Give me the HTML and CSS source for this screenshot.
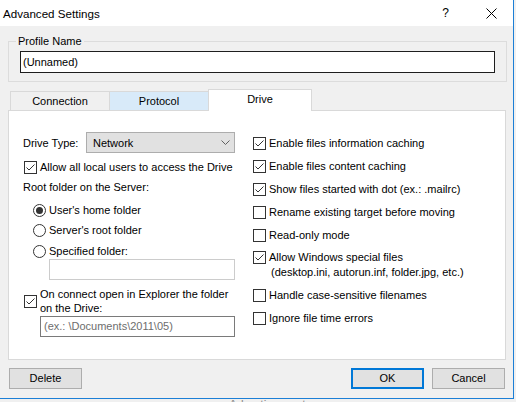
FILE: index.html
```html
<!DOCTYPE html>
<html>
<head>
<meta charset="utf-8">
<link rel="stylesheet" href="styles.css">
</head>
<body>
<div class="screen">
  <div class="window">
    <div class="titlebar">
      <span class="title">Advanced Settings</span>
      <span class="help">?</span>
      <svg class="close" width="11" height="11" viewBox="0 0 11 11"><path d="M0.5 0.5 L10.5 10.5 M10.5 0.5 L0.5 10.5" stroke="#000" stroke-width="1" fill="none"/></svg>
    </div>
    <div class="body">
      <fieldset class="profile">
        <legend>Profile Name</legend>
        <div class="edit name">(Unnamed)</div>
      </fieldset>

      <div class="tabs">
        <div class="tab">Connection</div>
        <div class="tab hover">Protocol</div>
        <div class="tab active">Drive</div>
      </div>

      <div class="panel">
        <div class="col left">
          <div class="row-select">
            <span>Drive Type:</span>
            <div class="select">
              <span>Network</span>
              <svg class="chev" width="9" height="5" viewBox="0 0 9 5"><path d="M0.5 0.5 L4.5 4.5 L8.5 0.5" stroke="#606060" stroke-width="1" fill="none"/></svg>
            </div>
          </div>
          <div class="cb cb-l r-allow">
            <span class="box on"><svg width="11" height="11" viewBox="0 0 11 11"><path d="M1.5 5.5 L4 8 L9.5 2.5" stroke="#333" stroke-width="1" fill="none"/></svg></span>
            <span class="lbl">Allow all local users to access the Drive</span>
          </div>
          <div class="text r-root">Root folder on the Server:</div>
          <div class="radio r-home"><span class="dot on"></span><span class="lbl">User's home folder</span></div>
          <div class="radio r-srv"><span class="dot"></span><span class="lbl">Server's root folder</span></div>
          <div class="radio r-spec"><span class="dot"></span><span class="lbl">Specified folder:</span></div>
          <div class="edit disabled spec"></div>
          <div class="cb cb-l multi r-explorer">
            <span class="box on"><svg width="11" height="11" viewBox="0 0 11 11"><path d="M1.5 5.5 L4 8 L9.5 2.5" stroke="#333" stroke-width="1" fill="none"/></svg></span>
            <span class="lbl">On connect open in Explorer the folder<br>on the Drive:</span>
          </div>
          <div class="edit path"><span class="ph">(ex.: \Documents\2011\05)</span></div>
        </div>

        <div class="col right">
          <div class="cb"><span class="box on"><svg width="11" height="11" viewBox="0 0 11 11"><path d="M1.5 5.5 L4 8 L9.5 2.5" stroke="#333" stroke-width="1" fill="none"/></svg></span><span class="lbl">Enable files information caching</span></div>
          <div class="cb"><span class="box on"><svg width="11" height="11" viewBox="0 0 11 11"><path d="M1.5 5.5 L4 8 L9.5 2.5" stroke="#333" stroke-width="1" fill="none"/></svg></span><span class="lbl">Enable files content caching</span></div>
          <div class="cb"><span class="box on"><svg width="11" height="11" viewBox="0 0 11 11"><path d="M1.5 5.5 L4 8 L9.5 2.5" stroke="#333" stroke-width="1" fill="none"/></svg></span><span class="lbl">Show files started with dot (ex.: .mailrc)</span></div>
          <div class="cb"><span class="box"></span><span class="lbl">Rename existing target before moving</span></div>
          <div class="cb"><span class="box"></span><span class="lbl">Read-only mode</span></div>
          <div class="cb two"><span class="box on"><svg width="11" height="11" viewBox="0 0 11 11"><path d="M1.5 5.5 L4 8 L9.5 2.5" stroke="#333" stroke-width="1" fill="none"/></svg></span><span class="lbl">Allow Windows special files<span class="sub">(desktop.ini, autorun.inf, folder.jpg, etc.)</span></span></div>
          <div class="cb"><span class="box"></span><span class="lbl">Handle case-sensitive filenames</span></div>
          <div class="cb"><span class="box"></span><span class="lbl">Ignore file time errors</span></div>
        </div>
      </div>

      <div class="buttons">
        <div class="btn">Delete</div>
        <div class="btn default">OK</div>
        <div class="btn">Cancel</div>
      </div>
    </div>
  </div>
  <div class="ad"><span>Advertisement</span></div>
</div>
</body>
</html>
```

FILE: styles.css
```css
* { box-sizing: border-box; }
html, body { margin: 0; padding: 0; }
body {
  font-family: "Liberation Sans", Arial, sans-serif;
  font-size: 11px;
  color: #000;
  background: #f0f0f0;
}
.screen {
  width: 516px;
  height: 402px;
  overflow: hidden;
  background: #f0f0f0;
  display: flex;
  flex-direction: column;
}
.window {
  flex: none;
  width: 514px;
  height: 399px;
  border-right: 1px solid #1c7fd6;
  border-bottom: 1px solid #1c7fd6;
  background: #f0f0f0;
  display: flex;
  flex-direction: column;
}
.titlebar {
  flex: none;
  height: 26px;
  background: #fff;
  display: flex;
  align-items: center;
}
.title { margin-left: 3px; font-size: 11.6px; }
.help { margin-left: auto; font-size: 12px; }
.close { margin-left: 37px; margin-right: 16px; }

.body { flex: 1; padding-top: 7px; }

.profile {
  margin: 0 0 0 8px;
  width: 499px;
  padding: 2px 11px 8px 11px;
  border: 1px solid #dcdcdc;
}
.profile legend {
  padding: 0 2px;
  margin-left: -4px;
  line-height: 16px;
  height: 16px;
}
.edit {
  background: #fff;
  border: 1px solid #7a7a7a;
}
.edit.name {
  height: 22px;
  border-color: #1e1e1e;
  padding-left: 2px;
  line-height: 20px;
}

.tabs {
  margin-top: 7px;
  margin-left: 10px;
  height: 21px;
  display: flex;
  align-items: flex-end;
}
.tab {
  width: 100px;
  height: 19px;
  border: 1px solid #d9d9d9;
  border-bottom: none;
  background: #f0f0f0;
  text-align: center;
  line-height: 19px;
}
.tab + .tab { margin-left: -1px; }
.tab.hover { background: #d8eaf9; }
.tab.active {
  position: relative;
  z-index: 1;
  width: 104px;
  height: 22px;
  margin-bottom: -1px;
  margin-left: -1px;
  background: #fff;
  line-height: 19px;
}

.panel {
  margin-left: 8px;
  width: 498px;
  height: 250px;
  border: 1px solid #d9d9d9;
  background: #fff;
  display: flex;
}
.col { display: flex; flex-direction: column; }
.col.left { width: 226px; padding-left: 14px; padding-top: 21px; }
.col.right { margin-left: 18px; padding-top: 24px; }

.row-select { height: 21px; display: flex; align-items: center; }
.select {
  margin-left: auto;
  width: 149px;
  height: 21px;
  background: #e1e1e1;
  border: 1px solid #adadad;
  display: flex;
  align-items: center;
  padding-left: 6px;
}
.chev { margin-left: auto; margin-right: 4px; }

.cb { display: flex; align-items: flex-start; line-height: 16px; }
.col.right .cb + .cb { margin-top: 7px; }
.box {
  flex: none;
  width: 13px;
  height: 13px;
  margin-top: 2px;
  border: 1px solid #333;
  background: #fff;
  display: flex;
}
.lbl { margin-left: 3px; white-space: nowrap; }
.cb.two .lbl { line-height: 15px; margin-top: 0; }
.cb.two .box { margin-top: 1px; }
.sub { display: block; padding-left: 2px; }

.cb-l { margin-left: 1px; }
.r-allow { margin-top: 6px; }
.text { line-height: 16px; }
.r-root { margin-top: 4px; }

.radio { display: flex; align-items: center; line-height: 16px; padding-left: 10px; }
.dot {
  flex: none;
  width: 13px;
  height: 13px;
  border: 1px solid #333;
  border-radius: 50%;
  background: #fff;
  display: flex;
  align-items: center;
  justify-content: center;
}
.dot.on::after {
  content: "";
  width: 7px;
  height: 7px;
  border-radius: 50%;
  background: #333;
}
.r-home { margin-top: 7px; }
.r-srv { margin-top: 4px; }
.r-spec { margin-top: 5px; }

.edit.spec {
  margin-left: 26px;
  width: 186px;
  height: 21px;
  border-color: #cccccc;
}
.multi { align-items: center; margin-top: 7px; }
.multi .lbl { line-height: 14px; }
.multi .box { margin-top: 0; }
.edit.path {
  margin-top: 1px;
  margin-left: 17px;
  width: 195px;
  height: 21px;
  padding-left: 3px;
  line-height: 19px;
}
.ph { color: #6d6d6d; }

.buttons {
  margin-top: 8px;
  display: flex;
  padding: 0 8px 0 9px;
}
.btn {
  width: 73px;
  height: 21px;
  background: #e1e1e1;
  border: 1px solid #adadad;
  text-align: center;
  line-height: 19px;
}
.btn.default {
  margin-left: auto;
  margin-right: 8px;
  border: 2px solid #0078d7;
  line-height: 17px;
}

.ad {
  flex: none;
  height: 3px;
  overflow: hidden;
  padding-left: 229px;
  color: #8a8a8a;
  font-size: 12px;
  line-height: 12px;
}
```
